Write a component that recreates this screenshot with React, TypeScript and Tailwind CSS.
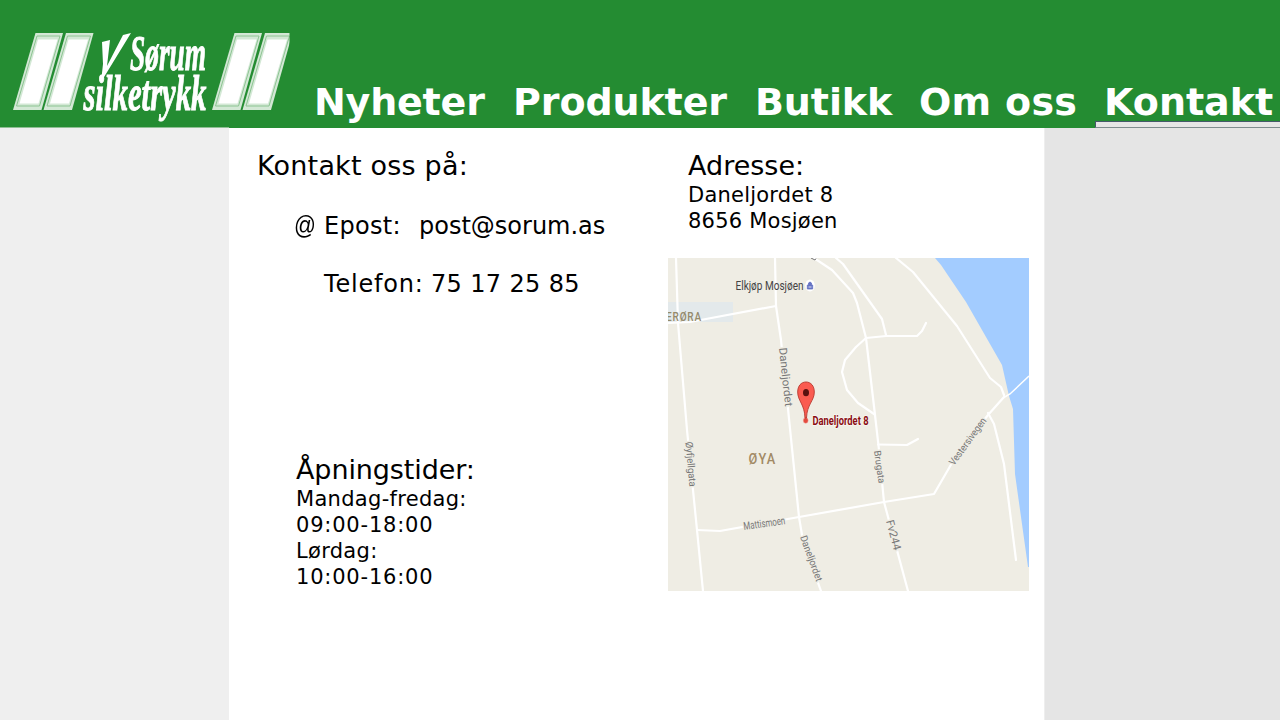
import React from "react";

const navItems = [
  { label: "Nyheter", cls: "w-[199px] tracking-[-0.2px]" },
  { label: "Produkter", cls: "w-[242px] tracking-[-0.1px]" },
  { label: "Butikk", cls: "w-[164px] tracking-[-0.1px]" },
  { label: "Om oss", cls: "w-[177px] tracking-[0.3px]" },
];

function Logo() {
  return (
    <svg width="292" height="127" viewBox="0 0 292 127" className="shrink-0" role="img" aria-label="Sørum silketrykk">
      <g className="blur-[0.5px]">
        {[0, 30.5, 199, 229.5].map((dx) => (
          <g key={dx} transform={`translate(${dx} 0)`}>
            <polygon points="35.5,33 63,33 41.5,110 13,110" fill="#d3e8d5" />
            <polygon points="37,36 60,36 39.500,106 16.500,106" fill="none" stroke="#8cc492" strokeWidth="1" />
            <polygon points="38,39.5 57.5,39.5 38.5,103.5 19.500,103.5" fill="#fff" />
          </g>
        ))}
        <polygon points="289.500,30 294,30 294,114 271,114 289.500,48" fill="#248c32" />
        <polygon points="102,42 110,40 107,66 123,35 131,33 101,82 103,64" fill="#fff" />
        <g fill="#fff" stroke="#fff" strokeWidth="1" fontFamily="Liberation Serif, serif" fontStyle="italic" fontWeight="bold">
          <text x="130" y="69.500" fontSize="51" textLength="76" lengthAdjust="spacingAndGlyphs">Sørum</text>
          <text x="83.500" y="109.500" fontSize="51" textLength="123" lengthAdjust="spacingAndGlyphs">silketrykk</text>
        </g>
      </g>
    </svg>
  );
}

function StreetMap() {
  return (
    <svg width="361" height="333" viewBox="668 258 361 333" className="ml-[-20px] mt-[24px] block" role="img" aria-label="Kart over Daneljordet 8">
      <rect x="668" y="258" width="361" height="333" fill="#efede4" />
      <path d="M935 258 L941 265 L966 302 L1002 365 L1009 396 L1013 409 L1015 474 L1028 567 H1029 V258Z" fill="#a3ccff" />
      <rect x="668" y="302" width="65" height="20" fill="#e3e9eb" />
      <g fill="none" stroke="#fff" strokeWidth="2.2" strokeLinejoin="round" strokeLinecap="round">
        <path d="M676 258 L678 323 L687 430 L697 530 L703 591" />
        <path d="M668 323 L690 322 L776 306" />
        <path d="M775 258 L776 306 L781 340 L799 517 L803 541 L821 591" />
        <path d="M697 530 L720 531 L799 517 L884 502 L934 494 L956 456 L988 415 L1004 397" />
        <path d="M814 258 L832 270 L853 293 L857 303 L866 338 L875 415 L879 450 L884 502 L908 591" />
        <path d="M836 258 L843 264 L882 319 L886 335" />
        <path d="M866 338 L886 336 L917 336 L922 331 L926 323" />
        <path d="M866 338 L856 347 L845 360 L842 372 L847 390 L858 403 L874 414" />
        <path d="M896 258 L913 272 L957 326 L990 378 L1001 387 L1004 395" />
        <path d="M988 413 L994 424 L1004 464 L1016 560" />
        <path d="M878 444.500 L907 445 L918 439" />
      </g>
      <path d="M1003 398 L1010 394 L1029 376" fill="none" stroke="#fff" strokeWidth="1.5" />
      <g fontFamily="Roboto, sans-serif" fontSize="11" fill="#777777" stroke="#efede4" strokeWidth="3" strokeLinejoin="round" paintOrder="stroke">
        <text transform="translate(779 348) rotate(84)" textLength="59" lengthAdjust="spacingAndGlyphs">Daneljordet</text>
        <text transform="translate(685.500 442) rotate(85)" fontSize="10" textLength="45" lengthAdjust="spacingAndGlyphs">Øyfjellgata</text>
        <text transform="translate(744 530) rotate(-8)" textLength="42" lengthAdjust="spacingAndGlyphs">Mattismoen</text>
        <text transform="translate(800 537) rotate(70)" fontSize="10" textLength="48" lengthAdjust="spacingAndGlyphs">Daneljordet</text>
        <text transform="translate(874 451) rotate(82)" fontSize="9.500" textLength="33" lengthAdjust="spacingAndGlyphs">Brugata</text>
        <text transform="translate(886 521) rotate(75)" textLength="31" lengthAdjust="spacingAndGlyphs">Fv244</text>
        <text transform="translate(954 466) rotate(-54)" fontSize="10" textLength="56" lengthAdjust="spacingAndGlyphs">Vestersivegen</text>
      </g>
      <g fontFamily="Roboto, sans-serif">
        <text x="735.500" y="290" fontSize="13" fill="#444" textLength="68" lengthAdjust="spacingAndGlyphs">Elkjøp Mosjøen</text>
        <text x="666" y="321" fontSize="12.500" fontWeight="500" fill="#948a6b" textLength="36" lengthAdjust="spacingAndGlyphs" letterSpacing="1">ERØRA</text>
        <text x="748.500" y="464" fontSize="15.500" fontWeight="500" fill="#a28a64" textLength="28" lengthAdjust="spacingAndGlyphs" letterSpacing="1.500">ØYA</text>
        <text x="812.500" y="424.500" fontSize="12.500" fontWeight="700" fill="#8b0d12" stroke="#fff" strokeWidth="1.500" strokeOpacity="0.600" paintOrder="stroke" textLength="56" lengthAdjust="spacingAndGlyphs">Daneljordet 8</text>
      </g>
      <path d="M811 258 L815 260 L816 258.500" fill="none" stroke="#777777" strokeWidth="1" />
      <ellipse cx="810" cy="285.500" rx="4.800" ry="6" fill="#fff" />
      <path d="M807.300 289 V285 H812.700 V289Z M808.500 285 V283 Q810 281 811.500 283 V285" fill="#6674c4" stroke="#6674c4" strokeWidth="0.800" />
      <path d="M808.500 287 H811.500" stroke="#fff" strokeWidth="0.800" />
      <ellipse cx="805.700" cy="420.500" rx="2.400" ry="2.800" fill="#e34a3e" stroke="#f4a59c" strokeWidth="0.500" />
      <path d="M805 418 C804.600 404 797.700 401 797.700 392 C797.700 386 801 382 806 382 C811 382 814.300 386 814.300 392 C814.300 401 807 404 806.500 418Z" fill="#fa5b50" stroke="#b8392f" strokeWidth="0.900" />
      <ellipse cx="806" cy="392.700" rx="3" ry="3.600" fill="#5a110f" />
    </svg>
  );
}

export default function App() {
  return (
    <div className="flex h-[720px] w-[1280px] flex-col overflow-hidden bg-white font-['DejaVu_Sans',sans-serif] text-black">
      <header className="flex h-[128px] shrink-0 bg-[#248c32]">
        <div className="flex w-[229px] shrink-0 flex-col border-b border-[#8fbf94]">
          <Logo />
        </div>
        <nav className="flex h-full w-[1051px] shrink-0 pl-[85px] text-[38px] leading-[44px] font-bold whitespace-nowrap text-white">
          {navItems.map((item) => (
            <a key={item.label} href="#" className={`mt-[80px] shrink-0 ${item.cls}`}>
              {item.label}
            </a>
          ))}
          <div className="ml-[-1px] flex w-[185px] shrink-0 flex-col">
            <a href="#" className="mt-[80px] h-[41px] pl-[9px]">
              Kontakt
            </a>
            <div className="h-[7px] border-t border-b border-l border-t-[#46596a] border-b-[#7f8c8e] border-l-[#46596a] bg-[#e6e6e6]" />
          </div>
        </nav>
      </header>
      <div className="flex grow">
        <aside className="w-[229px] shrink-0 bg-[#efefef]" />
        <main className="flex w-[815px] shrink-0">
          <section className="w-[459px] shrink-0 whitespace-nowrap">
            <h1 className="mt-[20px] pl-[28px] text-[27px] leading-[36px] tracking-[0.2px]">Kontakt oss på:</h1>
            <div className="mt-[24px] flex h-[36px] items-center pl-[65px] text-[24px]">
              <span className="w-[30px] pb-[2px] font-['Liberation_Sans',sans-serif] text-[26px]">
                <span className="inline-block origin-left scale-x-[0.83]">@</span>
              </span>
              <span className="w-[95px] tracking-[0.3px]">Epost:</span>
              <span>post@sorum.as</span>
            </div>
            <p className="mt-[22px] flex pl-[95px] text-[24px] leading-[36px]">
              <span className="w-[107px] tracking-[0.8px]">Telefon:</span>
              <span className="tracking-[0.35px]">75 17 25 85</span>
            </p>
            <div className="mt-[150px] pl-[67px]">
              <h2 className="text-[27px] leading-[36px] tracking-[-0.1px]">Åpningstider:</h2>
              <div className="mt-[-2px] text-[21px] leading-[26px]">
                <p className="tracking-[0.3px]">Mandag-fredag:</p>
                <p className="tracking-[0.8px]">09:00-18:00</p>
                <p className="tracking-[0.3px]">Lørdag:</p>
                <p className="tracking-[0.8px]">10:00-16:00</p>
              </div>
            </div>
          </section>
          <section className="w-[356px] shrink-0">
            <h2 className="mt-[20px] text-[27px] leading-[36px]">Adresse:</h2>
            <p className="mt-[-2px] text-[21px] leading-[26px] tracking-[0.22px]">
              Daneljordet 8
              <br />
              8656 Mosjøen
            </p>
            <StreetMap />
          </section>
        </main>
        <aside className="grow border-l border-[#eeeeee] bg-[#e5e5e5]" />
      </div>
    </div>
  );
}
